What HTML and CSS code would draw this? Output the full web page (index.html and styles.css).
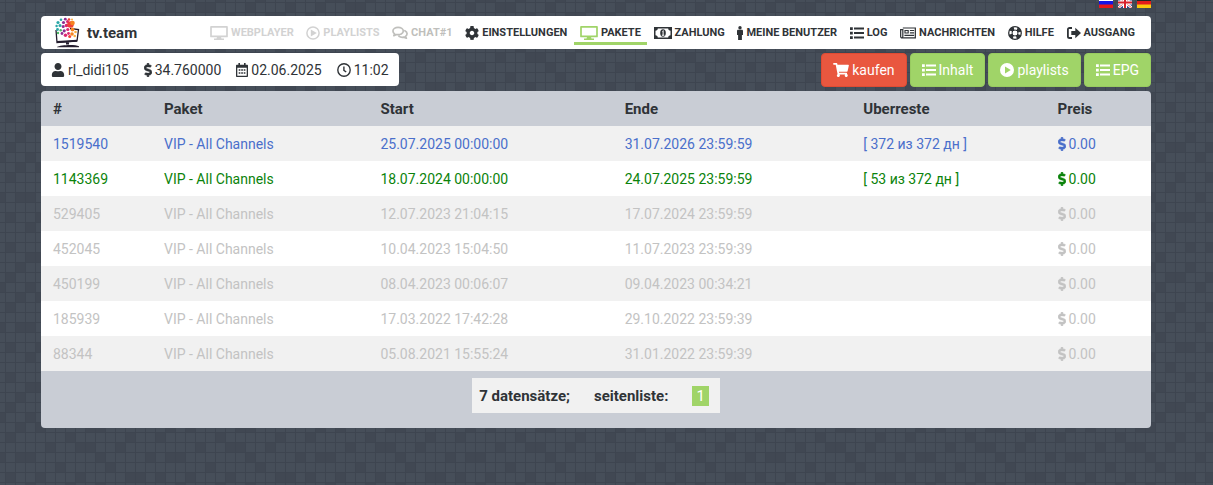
FILE: index.html
```html
<!DOCTYPE html>
<html lang="de">
<head>
    <meta charset="utf-8">
    <title>tv.team</title>
    <link rel="stylesheet" href="styles.css">
</head>
<body>
    <!-- icon set -->
    <svg class="sprite" aria-hidden="true">
        <symbol id="i-desktop" viewBox="0 0 18 14"><path d="M1 .9h16v9.500H1z" fill="none" stroke="currentColor" stroke-width="1.700" stroke-linejoin="round"/><path d="M7 11h4l.5 1.500H14V14H4v-1.500h2.500z"/></symbol>
        <symbol id="i-play-o" viewBox="0 0 14 14"><circle cx="7" cy="7" r="6.100" fill="none" stroke="currentColor" stroke-width="1.500"/><path d="M4.800 3.500v7L10.800 7z"/></symbol>
        <symbol id="i-play" viewBox="0 0 14 14"><path fill-rule="evenodd" d="M7 0a7 7 0 1 0 0 14A7 7 0 0 0 7 0zM5 3.500 10.800 7 5 10.500z"/></symbol>
        <symbol id="i-chat" viewBox="0 0 17 14"><path d="M6.500 1C3.500 1 1 2.600 1 4.900c0 1.300.7 2.300 1.800 3L2 9.800l2.800-1.200c3.900.7 7.200-1 7.200-3.700C12 2.600 9.500 1 6.500 1zM13.700 4.500c3 1.600 3 4.700.6 6.100l1 2-2.900-1.200c-2 .4-3.700 0-5-.9" fill="none" stroke="currentColor" stroke-width="1.800" stroke-linejoin="round" stroke-linecap="round"/></symbol>
        <symbol id="i-cog" viewBox="16 8 480 496"><path d="M487.400 315.700l-42.600-24.600c4.300-23.200 4.300-47 0-70.200l42.600-24.600c4.900-2.800 7.100-8.600 5.500-14-11.100-35.600-30-67.800-54.700-94.600-3.800-4.100-10-5.100-14.800-2.300L380.800 110c-17.900-15.400-38.500-27.300-60.800-35.100V25.800c0-5.600-3.900-10.500-9.400-11.700-36.700-8.200-74.300-7.800-109.200 0-5.500 1.200-9.400 6.100-9.400 11.700V75c-22.200 7.900-42.800 19.800-60.800 35.100L88.700 85.500c-4.900-2.800-11-1.900-14.800 2.300-24.700 26.700-43.600 58.900-54.700 94.600-1.700 5.400.6 11.200 5.500 14L67.300 221c-4.300 23.200-4.300 47 0 70.200l-42.600 24.600c-4.900 2.800-7.100 8.600-5.500 14 11.100 35.600 30 67.800 54.700 94.600 3.800 4.100 10 5.100 14.800 2.300l42.600-24.600c17.900 15.400 38.500 27.300 60.800 35.100v49.200c0 5.600 3.900 10.500 9.400 11.700 36.700 8.200 74.300 7.800 109.200 0 5.500-1.200 9.400-6.100 9.400-11.700v-49.200c22.200-7.900 42.800-19.800 60.800-35.100l42.600 24.600c4.900 2.800 11 1.900 14.800-2.300 24.700-26.700 43.600-58.900 54.700-94.600 1.500-5.500-.7-11.300-5.600-14.100zM256 336c-44.100 0-80-35.900-80-80s35.900-80 80-80 80 35.900 80 80-35.900 80-80 80z"/></symbol>
        <symbol id="i-money" viewBox="0 0 18 12"><path fill-rule="evenodd" d="M0 0h18v12H0zM3.800 1.600c0 1.300-1 2.200-2.300 2.200v4.400c1.300 0 2.300 1 2.300 2.200h10.400c0-1.200 1-2.200 2.300-2.200V3.800c-1.300 0-2.300-.9-2.300-2.200z"/><ellipse cx="9" cy="6" rx="2.800" ry="3.700"/><path d="M8 4.400 9.200 3.300h.4v4.500h.7v.9H7.900v-.9h.7V4.800z" fill="#fff"/></symbol>
        <symbol id="i-male" viewBox="0 0 6 14"><circle cx="3" cy="1.700" r="1.700"/><path d="M1.300 3.800h3.400c.8 0 1.300.5 1.300 1.300v4H4.900V14H1.100V9.100H0v-4c0-.8.500-1.300 1.300-1.300z"/></symbol>
        <symbol id="i-list" viewBox="0 0 14 12"><path d="M0 .2h2.800v2.700H0zM4 .5h10v2.100H4zM0 4.700h2.800v2.700H0zM4 5h10v2.100H4zM0 9.200h2.800v2.700H0zM4 9.500h10v2.100H4z"/></symbol>
        <symbol id="i-news" viewBox="0 0 17 12"><path d="M3 .7h13.300v10.500H2.200C1.300 11.200.7 10.600.7 9.700V2.300H3v7.500c0 .8-.4 1.200-1 1.300" fill="none" stroke="currentColor" stroke-width="1.300"/><path fill-rule="evenodd" d="M4.700 2.700h4.600v3.900H4.700zm1.200 1.200v1.500h2.200V3.900zM10.500 2.700H15v1.200h-4.500zm0 2.600H15v1.200h-4.500zM4.700 7.900H15v1.200H4.700z"/></symbol>
        <symbol id="i-ring" viewBox="0 0 14 14"><circle cx="7" cy="7" r="6.300" fill="none" stroke="currentColor" stroke-width="1.300"/><circle cx="7" cy="7" r="4.700" fill="none" stroke="currentColor" stroke-width="4" stroke-dasharray="4 3.380" stroke-dashoffset="-1.690"/><circle cx="7" cy="7" r="3" fill="none" stroke="currentColor"/></symbol>
        <symbol id="i-exit" viewBox="0 0 14 12"><path d="M5 1H2.600C1.500 1 .9 1.600.9 2.600v6.800c0 1 .6 1.600 1.700 1.600H5" fill="none" stroke="currentColor" stroke-width="1.800"/><path d="M4.300 3.900h4V.8L14 6l-5.700 5.200V8.100h-4z"/></symbol>
        <symbol id="i-user" viewBox="0 0 448 512"><path d="M224 256c70.700 0 128-57.300 128-128S294.700 0 224 0 96 57.300 96 128s57.300 128 128 128zm89.600 32h-16.700c-22.200 10.200-46.900 16-72.900 16s-50.600-5.800-72.900-16h-16.700C60.200 288 0 348.200 0 422.400V464c0 26.500 21.500 48 48 48h352c26.500 0 48-21.500 48-48v-41.600c0-74.200-60.200-134.400-134.400-134.400z"/></symbol>
        <symbol id="i-dollar" viewBox="0 0 288 512"><path d="M209.200 233.400l-108-31.600C88.700 198.200 80 186.500 80 173.500c0-16.300 13.200-29.500 29.500-29.500h66.300c12.200 0 24.200 3.700 34.200 10.500 6.100 4.100 14.300 3.100 19.500-2l34.800-34c7.100-6.900 6.100-18.400-1.800-24.500C238 74.800 207.400 64.100 176 64V16c0-8.800-7.200-16-16-16h-32c-8.800 0-16 7.200-16 16v48h-2.500C45.800 64-5.400 118.700.5 183.600c4.200 46.100 39.400 83.600 83.800 96.600l102.500 30c12.500 3.700 21.200 15.300 21.200 28.300 0 16.300-13.200 29.500-29.500 29.500h-66.300C100 368 88 364.300 78 357.500c-6.100-4.100-14.300-3.100-19.500 2l-34.800 34c-7.100 6.900-6.100 18.400 1.800 24.500 24.500 19.200 55.100 29.900 86.500 30v48c0 8.800 7.200 16 16 16h32c8.800 0 16-7.200 16-16v-48.200c46.600-.9 90.300-28.600 105.700-72.700 21.500-61.600-14.600-124.800-72.500-141.700z" stroke="currentColor" stroke-width="16"/></symbol>
        <symbol id="i-calendar" viewBox="0 0 12 14"><path fill-rule="evenodd" d="M2.400 0h1.600v1.700h4V0h1.600v1.700H11c.6 0 1 .4 1 1V13c0 .6-.4 1-1 1H1c-.6 0-1-.4-1-1V2.700c0-.6.400-1 1-1h1.400zM1.300 4.800v7.900h9.400V4.800z"/><path d="M2.700 6.200h1.700v1.600H2.700zm2.500 0h1.700v1.600H5.200zm2.500 0h1.700v1.600H7.700zM2.700 9.200h1.700v1.600H2.700zm2.500 0h1.700v1.600H5.200zm2.500 0h1.700v1.600H7.700z"/></symbol>
        <symbol id="i-clock" viewBox="0 0 14 14"><path d="M7 .8a6.200 6.200 0 1 0 0 12.400A6.200 6.200 0 0 0 7 .8zM6.900 3.500v3.800l2.300 1.700" fill="none" stroke="currentColor" stroke-width="1.400"/></symbol>
        <symbol id="i-cart" viewBox="0 0 576 512"><path d="M528.120 301.319l47.273-208C578.806 78.301 567.391 64 551.990 64H159.208l-9.166-44.810C147.758 8.021 137.930 0 126.529 0H24C10.745 0 0 10.745 0 24v16c0 13.255 10.745 24 24 24h69.883l70.248 343.435C147.325 417.100 136 435.222 136 456c0 30.928 25.072 56 56 56s56-25.072 56-56c0-15.674-6.447-29.835-16.824-40h209.647C430.447 426.165 424 440.326 424 456c0 30.928 25.072 56 56 56s56-25.072 56-56c0-22.172-12.888-41.332-31.579-50.405l5.517-24.276c3.413-15.018-8.002-29.319-23.403-29.319H218.117l-6.545-32h293.145c11.206 0 20.920-7.754 23.403-18.681z"/></symbol>
    </svg>

    <div class="container">
        <div class="langs">
            <a href="#" aria-label="Русский"><svg class="flag" viewBox="0 0 14 11"><path fill="#fff" d="M0 0h14v4H0z"/><path fill="#1414e6" d="M0 4h14v4H0z"/><path fill="#e81818" d="M0 7.500h14V11H0z"/></svg></a>
            <a href="#" aria-label="English"><svg class="flag" viewBox="0 0 14 11"><path fill="#31418c" d="M0 0h14v11H0z"/><path d="M0 0l14 11M14 0L0 11" stroke="#fff" stroke-width="2.600"/><path d="M0 0l14 11M14 0L0 11" stroke="#d33" stroke-width=".8"/><path d="M7 0v11M0 5.500h14" stroke="#fff" stroke-width="4"/><path d="M7 0v11M0 5.500h14" stroke="#d8202c" stroke-width="2"/></svg></a>
            <a href="#" aria-label="Deutsch"><svg class="flag" viewBox="0 0 14 11"><path fill="#222" d="M0 0h14v4H0z"/><path fill="#e31b1b" d="M0 4h14v4H0z"/><path fill="#f9c80e" d="M0 7.500h14V11H0z"/></svg></a>
        </div>

        <div class="navbar">
            <a href="#" class="brand">
                <svg class="logo" viewBox="0 0 26 30">
                    <path d="M2 12.500 3 25l20-1.500L24.500 12 16 11" fill="none" stroke="#241d2e" stroke-width="1.300"/>
                    <path d="M3 23.500l20-1.200v2L3 25.500zM12 25h3v2h-3zM3 29.500c3-2 18-2.800 22-.7v1H3z" fill="#241d2e"/>
                    <g fill="#2ba8a8"><circle cx="4" cy="5" r="1.600"/><circle cx="2.600" cy="8.500" r="1.200"/><circle cx="6" cy="8" r="1.500"/><circle cx="3.500" cy="12" r="1.400"/><circle cx="7" cy="2.300" r="1.300"/></g>
                    <g fill="#4bb865"><circle cx="4" cy="15.500" r="1.200"/><circle cx="6.700" cy="12.800" r="1.200"/></g>
                    <g fill="#8d2d91"><circle cx="9.500" cy="5" r="1.600"/><circle cx="11.300" cy="1.700" r="1.400"/><circle cx="9.200" cy="9" r="1.500"/><circle cx="8" cy="16" r="1.400"/><circle cx="10.200" cy="13.300" r="1.600"/></g>
                    <g fill="#dc2670"><circle cx="13.500" cy="4" r="1.500"/><circle cx="12.500" cy="8" r="1.800"/><circle cx="13.800" cy="12" r="1.600"/><circle cx="11.500" cy="17.700" r="1.700"/><circle cx="14.500" cy="16" r="1.400"/></g>
                    <g fill="#ef4136"><circle cx="16.500" cy="7" r="3.300"/><circle cx="15" cy="2" r="1.300"/><circle cx="15.700" cy="19" r="1.500"/></g>
                    <g fill="#f58220"><circle cx="18.500" cy="5.500" r="2.300"/><circle cx="18.500" cy="12" r="1.900"/><circle cx="18" cy="16.500" r="1.800"/></g>
                    <g fill="#fbb040"><circle cx="18" cy="2" r="1"/><circle cx="21.500" cy="14.500" r="1.300"/><circle cx="20.700" cy="18.500" r="1.300"/></g>
                </svg>
                <span>tv.team</span>
            </a>
            <nav class="menu">
                <a href="#" class="off"><svg class="icon w18"><use href="#i-desktop"/></svg>WEBPLAYER</a>
                <a href="#" class="off"><svg class="icon w14"><use href="#i-play-o"/></svg>PLAYLISTS</a>
                <a href="#" class="off chat"><svg class="icon w16"><use href="#i-chat"/></svg>CHAT#1</a>
                <a href="#"><svg class="icon w14"><use href="#i-cog"/></svg>EINSTELLUNGEN</a>
                <a href="#" class="active"><svg class="icon w18"><use href="#i-desktop"/></svg>PAKETE</a>
                <a href="#"><svg class="icon w18"><use href="#i-money"/></svg>ZAHLUNG</a>
                <a href="#"><svg class="icon w6"><use href="#i-male"/></svg>MEINE BENUTZER</a>
                <a href="#"><svg class="icon w14"><use href="#i-list"/></svg>LOG</a>
                <a href="#"><svg class="icon w16"><use href="#i-news"/></svg>NACHRICHTEN</a>
                <a href="#"><svg class="icon w14"><use href="#i-ring"/></svg>HILFE</a>
                <a href="#"><svg class="icon w14"><use href="#i-exit"/></svg>AUSGANG</a>
            </nav>
        </div>

        <div class="toolbar">
            <div class="info">
                <span><svg class="icon w14"><use href="#i-user"/></svg>rl_didi105</span>
                <span><svg class="icon w8"><use href="#i-dollar"/></svg>34.760000</span>
                <span><svg class="icon w12"><use href="#i-calendar"/></svg>02.06.2025</span>
                <span><svg class="icon w14"><use href="#i-clock"/></svg>11:02</span>
            </div>
            <div class="buttons">
                <button type="button" class="btn red"><svg class="icon w16"><use href="#i-cart"/></svg>kaufen</button>
                <button type="button" class="btn"><svg class="icon w14"><use href="#i-list"/></svg>Inhalt</button>
                <button type="button" class="btn"><svg class="icon w14"><use href="#i-play"/></svg>playlists</button>
                <button type="button" class="btn"><svg class="icon w14"><use href="#i-list"/></svg>EPG</button>
            </div>
        </div>

        <div class="panel">
            <table class="packets">
                <thead>
                    <tr>
                        <th class="c-id">#</th>
                        <th class="c-name">Paket</th>
                        <th class="c-start">Start</th>
                        <th class="c-end">Ende</th>
                        <th class="c-rest">Uberreste</th>
                        <th>Preis</th>
                    </tr>
                </thead>
                <tbody>
                    <tr class="next">
                        <td>1519540</td><td>VIP - All Channels</td><td>25.07.2025 00:00:00</td><td>31.07.2026 23:59:59</td><td>[ 372 из 372 дн ]</td>
                        <td><svg class="icon w8"><use href="#i-dollar"/></svg>0.00</td>
                    </tr>
                    <tr class="current">
                        <td>1143369</td><td>VIP - All Channels</td><td>18.07.2024 00:00:00</td><td>24.07.2025 23:59:59</td><td>[ 53 из 372 дн ]</td>
                        <td><svg class="icon w8"><use href="#i-dollar"/></svg>0.00</td>
                    </tr>
                    <tr>
                        <td>529405</td><td>VIP - All Channels</td><td>12.07.2023 21:04:15</td><td>17.07.2024 23:59:59</td><td></td>
                        <td><svg class="icon w8"><use href="#i-dollar"/></svg>0.00</td>
                    </tr>
                    <tr>
                        <td>452045</td><td>VIP - All Channels</td><td>10.04.2023 15:04:50</td><td>11.07.2023 23:59:39</td><td></td>
                        <td><svg class="icon w8"><use href="#i-dollar"/></svg>0.00</td>
                    </tr>
                    <tr>
                        <td>450199</td><td>VIP - All Channels</td><td>08.04.2023 00:06:07</td><td>09.04.2023 00:34:21</td><td></td>
                        <td><svg class="icon w8"><use href="#i-dollar"/></svg>0.00</td>
                    </tr>
                    <tr>
                        <td>185939</td><td>VIP - All Channels</td><td>17.03.2022 17:42:28</td><td>29.10.2022 23:59:39</td><td></td>
                        <td><svg class="icon w8"><use href="#i-dollar"/></svg>0.00</td>
                    </tr>
                    <tr>
                        <td>88344</td><td>VIP - All Channels</td><td>05.08.2021 15:55:24</td><td>31.01.2022 23:59:39</td><td></td>
                        <td><svg class="icon w8"><use href="#i-dollar"/></svg>0.00</td>
                    </tr>
                </tbody>
            </table>
            <div class="footer">
                <div class="pager">
                    <span>7 datensätze;</span>
                    <span>seitenliste:</span>
                    <a href="#" class="page">1</a>
                </div>
            </div>
        </div>
    </div>
</body>
</html>
```

FILE: styles.css
```css
* {
    box-sizing: border-box;
}
body {
    margin: 0;
    padding: 0 36px 0 15px;
    min-height: 100vh;
    font-family: Roboto, "Noto Sans", sans-serif;
    font-size: 14px;
    line-height: 20px;
    color: #2f3337;
    background-color: #464e59;
    /* 10px grid over randomly darkened cells */
    background-image:
        linear-gradient(to right, #3e4550 1px, transparent 1px),
        linear-gradient(#3e4550 1px, transparent 1px),
        url("data:image/svg+xml,%3Csvg xmlns='http://www.w3.org/2000/svg' width='150' height='130'%3E%3Cpath fill='%23414853' d='M10 0h10v10h-10zM40 0h20v10h-20zM90 0h10v10h-10zM130 0h10v10h-10zM0 10h10v10h-10zM70 10h10v10h-10zM110 10h20v10h-20zM20 20h10v10h-10zM50 20h10v10h-10zM100 20h10v10h-10zM140 20h10v10h-10zM10 30h10v10h-10zM30 30h10v10h-10zM80 30h20v10h-20zM0 40h10v10h-10zM60 40h10v10h-10zM120 40h10v10h-10zM40 50h10v10h-10zM70 50h20v10h-20zM110 50h10v10h-10zM10 60h20v10h-20zM90 60h10v10h-10zM140 60h10v10h-10zM50 70h10v10h-10zM100 70h10v10h-10zM0 80h10v10h-10zM30 80h10v10h-10zM70 80h10v10h-10zM120 80h20v10h-20zM20 90h10v10h-10zM60 90h10v10h-10zM90 90h10v10h-10zM40 100h20v10h-20zM110 100h10v10h-10zM0 110h10v10h-10zM80 110h10v10h-10zM130 110h10v10h-10zM20 120h20v10h-20zM60 120h10v10h-10zM100 120h10v10h-10z'/%3E%3C/svg%3E");
    background-size: 10px 10px, 10px 10px, 150px 130px;
    background-position: 5px 2px;
}
a {
    color: inherit;
    text-decoration: none;
}
.sprite {
    display: none;
}
.container {
    max-width: 1110px;
    margin: 0 auto;
}
.icon {
    height: 14px;
    flex: none;
    fill: currentColor;
}
.w6 { width: 6px; }
.w8 { width: 8px; }
.w12 { width: 12px; }
.w14 { width: 14px; }
.w16 { width: 16px; }
.w18 { width: 18px; }

.langs {
    display: flex;
    justify-content: flex-end;
    gap: 5px;
    height: 16px;
}
.langs a {
    display: flex;
    align-items: flex-end;
    height: 8px;
    overflow: hidden;
}
.flag {
    width: 14px;
    height: 11px;
    flex: none;
}

.navbar {
    display: flex;
    height: 33px;
    padding: 0 10px 0 13px;
    background: #fff;
    border-radius: 4px;
}
.brand {
    display: flex;
    align-items: center;
    gap: 7px;
    font-size: 15px;
    font-weight: bold;
    width: 150px;
}
.logo {
    width: 26px;
    height: 31px;
}
.menu {
    display: flex;
    flex: 1;
    justify-content: space-between;
    font-size: 11px;
    font-weight: bold;
}
.menu a {
    display: flex;
    align-items: center;
    gap: 3px;
    height: 29px;
    padding: 7px 6px 0;
    white-space: nowrap;
    border-bottom: 3px solid transparent;
}
.menu .off {
    color: #d2d2d2;
}
.menu .chat {
    color: #bfbfbc;
}
.menu .active {
    border-color: #a0d468;
}
.menu .active .icon {
    color: #a0d468;
}

.toolbar {
    display: flex;
    justify-content: space-between;
    padding: 4px 0;
}
.info {
    display: flex;
    align-items: center;
    gap: 15px;
    height: 33px;
    padding: 0 10px;
    background: #fff;
    border-radius: 4px;
}
.info span {
    display: flex;
    align-items: center;
    gap: 3px;
}
.buttons {
    display: flex;
    gap: 3px;
}
.btn {
    display: flex;
    align-items: center;
    gap: 3px;
    height: 34px;
    padding: 0 11px;
    border: 1px solid #98cb60;
    border-radius: 4px;
    background: #a0d468;
    color: #fff;
    font: inherit;
}
.btn.red {
    background: #e9573f;
    border-color: #e04b33;
}

.panel {
    overflow: hidden;
    border-radius: 4px;
    background: #c9cdd5;
}
.packets {
    width: 100%;
    table-layout: fixed;
    border-collapse: collapse;
}
.packets th,
.packets td {
    height: 35px;
    padding: 0 12px;
    text-align: left;
}
.packets th {
    font-size: 15px;
}
.packets td {
    color: #c3c3c3;
    background: #fff;
}
.packets tbody tr:nth-child(odd) td {
    background: #f1f1f1;
}
.packets .next td {
    color: #4a6fcb;
}
.packets .current td {
    color: #0b830b;
}
.packets .icon {
    margin-right: 3px;
    vertical-align: -2px;
}
.c-id { width: 10%; }
.c-name { width: 19.5%; }
.c-start { width: 22%; }
.c-end { width: 21.5%; }
.c-rest { width: 17.5%; }

.footer {
    display: flex;
    justify-content: center;
    padding: 7px 0 15px;
}
.pager {
    display: flex;
    align-items: center;
    gap: 24px;
    height: 35px;
    padding: 0 11px 0 7px;
    background: #f1f1f1;
    font-size: 15px;
    font-weight: bold;
}
.page {
    padding: 0 4px;
    background: #a0d468;
    color: #fff;
    font-weight: normal;
}
```
